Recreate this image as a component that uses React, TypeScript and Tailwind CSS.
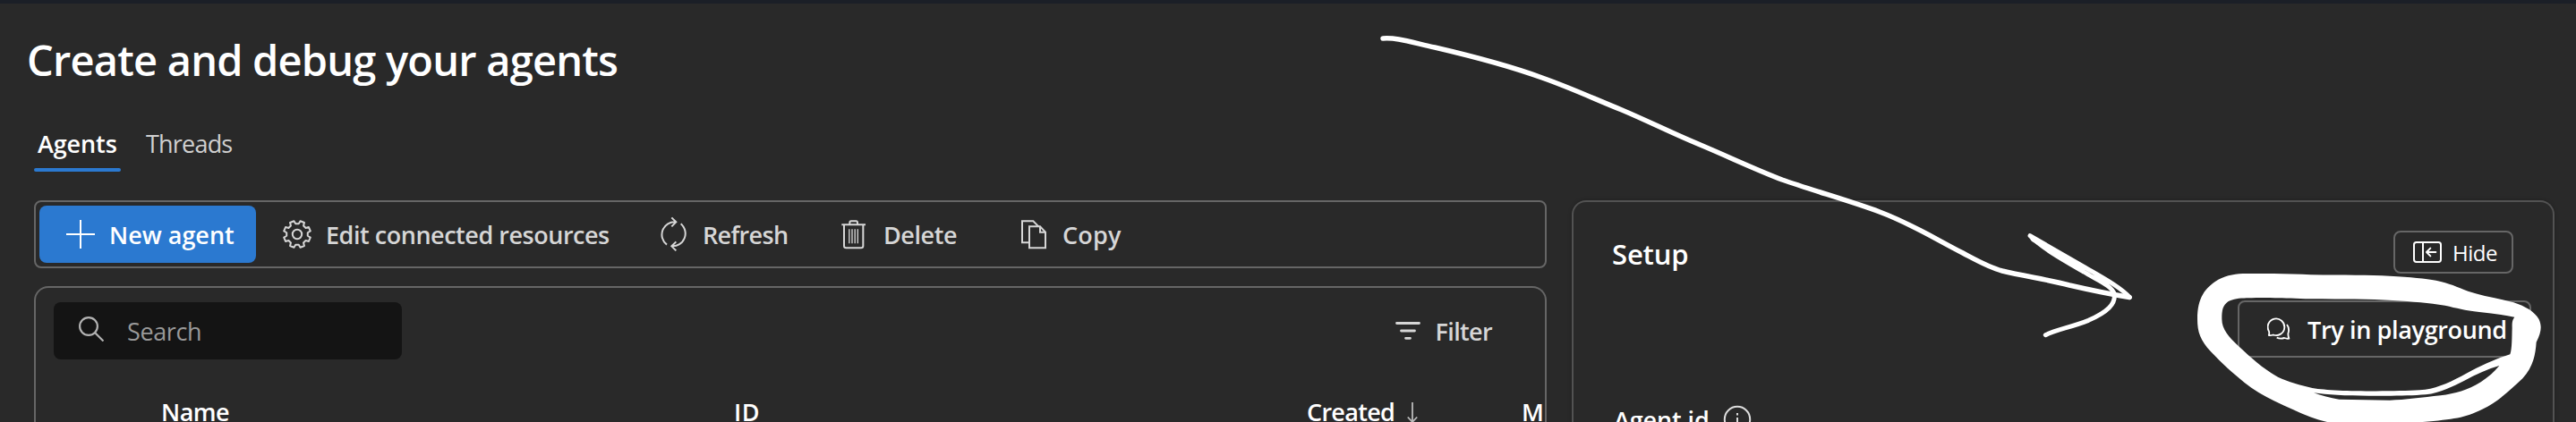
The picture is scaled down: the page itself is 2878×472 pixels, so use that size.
import type { ReactNode } from 'react';

const gearPath = (() => {
  const pts: string[] = [];
  for (let i = 0; i < 8; i++) {
    const mid = 22.5 + i * 45;
    const add = (deg: number, r: number) => {
      const a = (deg * Math.PI) / 180;
      pts.push(`${(16 + r * Math.cos(a)).toFixed(2)} ${(16 + r * Math.sin(a)).toFixed(2)}`);
    };
    add(mid - 14, 11.9);
    add(mid - 9, 15.2);
    add(mid + 9, 15.2);
    add(mid + 14, 11.9);
  }
  return `M${pts.join('L')}Z`;
})();

const stroke = { fill: 'none', stroke: 'currentColor' } as const;

function PlusIcon() {
  return (
    <svg className="h-8 w-8" viewBox="0 0 32 32" {...stroke} strokeWidth="2">
      <path d="M16 0V32M0 16H32" />
    </svg>
  );
}

function GearIcon() {
  return (
    <svg className="h-8 w-8" viewBox="0 0 32 32" {...stroke} strokeWidth="2" strokeLinejoin="round">
      <path d={gearPath} />
      <circle cx="16" cy="16" r="5.2" />
    </svg>
  );
}

function RefreshIcon() {
  return (
    <svg className="h-10 w-8" viewBox="36 36 96 120" {...stroke} strokeWidth="6">
      <path d="M60 131A42.500 42.500 0 0 1 90 55M76 40L91 55L76 70" />
      <path d="M107 61A42.500 42.500 0 0 1 77 136M91 121L76 136L91 151" />
    </svg>
  );
}

function TrashIcon() {
  return (
    <svg className="h-[34px] w-7" viewBox="60 44 84 102" {...stroke} strokeWidth="6">
      <path d="M61 63H141M88 63V56Q88 51 93 51H109Q114 51 114 56V63" />
      <path d="M69 63V134Q69 141 76 141H126Q133 141 133 134V63" />
      <path d="M86.500 78V126M96 78V126M105.500 78V126M115 78V126" strokeWidth="4" />
    </svg>
  );
}

function CopyIcon() {
  return (
    <svg className="h-[34px] w-[30px]" viewBox="660 44 90 102" {...stroke} strokeWidth="6">
      <path d="M690 123H666V51H703L721 69" />
      <path d="M690 69H726L744 88V141H690ZM726 69V88H744" />
    </svg>
  );
}

function SearchIcon() {
  return (
    <svg className="h-7 w-7" viewBox="0 0 28 28" {...stroke} strokeWidth="2.200">
      <circle cx="11" cy="11" r="9.900" />
      <path d="M18 18L27.500 27.500" />
    </svg>
  );
}

function FilterIcon() {
  return (
    <svg className="h-5 w-7" viewBox="0 0 28 20" {...stroke} strokeWidth="2.800" strokeLinecap="round">
      <path d="M1.500 1.500H26.500M6.500 10H21.500M11.500 18.300H16.500" />
    </svg>
  );
}

function SortDownIcon() {
  return (
    <svg className="h-8 w-3" viewBox="0 0 12 32" {...stroke} strokeWidth="1.8">
      <path d="M6 0V22M.800 16.500L6 22L11.200 16.500" />
    </svg>
  );
}

function PanelIcon() {
  return (
    <svg className="h-6 w-8" viewBox="588 30 96 72" {...stroke} strokeWidth="6">
      <rect x="591" y="33" width="90" height="66" rx="8" />
      <path d="M621 33V99" />
      <path d="M633 66H664M646 53L633 66L646 79" strokeLinecap="round" strokeLinejoin="round" />
    </svg>
  );
}

function ChatIcon() {
  return (
    <svg className="h-[26px] w-[26px]" viewBox="99 286 78 78" {...stroke} strokeWidth="5.5" strokeLinejoin="round">
      <path d="M104.500 346Q107 338 104.500 332A28 28 0 1 1 119 344.500Q112 347 104.500 346Z" />
      <path d="M165 310Q175 323 169 341Q169 349 172 357Q164 358 156 355Q143 359 131 354" />
    </svg>
  );
}

function InfoIcon() {
  return (
    <svg className="h-8 w-8" viewBox="0 0 32 32" {...stroke} strokeWidth="2">
      <circle cx="16" cy="16" r="14.200" />
      <path d="M16 14V23M16 9V11.500" />
    </svg>
  );
}

function ToolButton({ icon, label, className }: { icon: ReactNode; label: string; className: string }) {
  return (
    <button className={`flex h-16 shrink-0 items-center whitespace-nowrap font-semibold leading-10 ${className}`}>
      {icon}
      <span className="pt-[2px]">{label}</span>
    </button>
  );
}

function Annotations() {
  return (
    <svg className="pointer-events-none absolute inset-0" width="2878" height="472" viewBox="0 0 2878 472">
      <path
        d="M1545 43C1560 42 1572 46 1603 53C1650 64 1685 73 1723 87C1757 99 1782 111 1812 123C1845 137 1870 150 1902 163C1935 177 1960 189 1991 201C2025 213 2068 225 2100 237C2135 250 2160 266 2193 283C2210 292 2222 299 2237 303C2262 309 2290 313 2312 319C2338 325 2352 328 2379 332.500"
        fill="none" stroke="#fff" strokeWidth="5.500" strokeLinecap="round"
      />
      <g transform="translate(2100 180) scale(.333333)" fill="none" stroke="#fff" strokeWidth="15" strokeLinecap="round" strokeLinejoin="round">
        <path d="M838 458C810 425 745 390 690 358L504 251C540 290 620 335 684 372C725 398 780 418 787 448C790 480 765 506 700 535C640 559 590 566 556 584" />
        <path d="M515 262L680 358" strokeWidth="18" />
      </g>
      <g transform="translate(2420 200) scale(.333333)">
        <path
          fill="#fff"
          fillRule="evenodd"
          d="M270 318C340 317 420 318 485 322C600 324 680 322 750 326C820 330 870 334 905 341C950 350 975 363 1012 377C1060 393 1110 400 1165 415C1205 428 1235 446 1250 472C1260 495 1258 515 1241 548C1238 590 1232 628 1195 670C1150 712 1110 750 1060 773C1000 803 965 806 860 816L540 816C500 806 470 794 430 776C370 750 310 722 262 683C225 654 185 617 150 580C115 540 105 515 105 470C105 400 130 365 175 338C205 323 235 318 270 318Z
          M187 470C187 440 190 425 208 412C225 403 245 401 270 400C350 398 400 400 485 403C600 405 680 403 760 408C830 412 880 417 935 425C975 434 1000 441 1050 447C1090 452 1130 456 1168 464C1160 475 1160 480 1160 500C1159 530 1160 570 1153 589C1100 605 1040 635 990 662C940 688 900 705 850 709C780 713 650 713 580 710C540 708 515 706 490 702C450 692 410 682 375 665C330 640 290 605 245 563C210 530 187 505 187 470Z
          M495 718C540 725 600 728 680 728C760 729 820 728 870 724C920 718 960 697 1000 677C1040 655 1080 638 1117 627C1100 648 1080 665 1055 682C1010 710 970 721 920 727C860 733 800 742 750 743L580 740C550 735 520 727 495 718Z"
        />
      </g>
    </svg>
  );
}

export default function App() {
  return (
    <div className="relative flex h-[472px] w-[2878px] flex-col overflow-hidden bg-[#292929] font-['Open_Sans',sans-serif] text-[27px] text-white">
      <div className="h-1 shrink-0 bg-[#1b1f27]" />
      <h1 className="mt-[31px] h-16 shrink-0 pl-[30px] text-[47px] font-semibold leading-[64px] tracking-[-0.8px]">
        Create and debug your agents
      </h1>

      <nav className="mt-[42px] flex h-[51px] shrink-0 pl-[38px] leading-10">
        <div className="flex w-[97px] flex-col gap-[7px]">
          <span className="pl-1 font-semibold tracking-[-0.1px]">Agents</span>
          <span className="h-1 rounded-full bg-[#2b79d0]" />
        </div>
        <span className="ml-[28px] tracking-[-0.8px] text-[#d0d0d0]">Threads</span>
      </nav>

      <main className="mt-8 flex shrink-0 gap-7 pl-[38px]">
        <section className="flex w-[1690px] flex-col gap-5">
          <div className="flex h-[76px] items-center rounded-lg border-2 border-[#666] pl-1 text-[#d6d6d6]">
            <ToolButton icon={<PlusIcon />} label="New agent" className="w-[242px] gap-[16px] rounded-lg bg-[#2b79d0] pl-[30px] text-white" />
            <ToolButton icon={<GearIcon />} label="Edit connected resources" className="w-[420px] gap-[16px] pl-[30px] tracking-[-0.47px]" />
            <ToolButton icon={<RefreshIcon />} label="Refresh" className="w-[204px] gap-[16px] pl-[31px] tracking-[-0.65px]" />
            <ToolButton icon={<TrashIcon />} label="Delete" className="w-[200px] gap-[19px] pl-[30px] tracking-[-0.42px]" />
            <ToolButton icon={<CopyIcon />} label="Copy" className="gap-[17px] pl-[30px] tracking-[0.2px]" />
          </div>

          <div className="flex h-[200px] flex-col overflow-hidden rounded-t-2xl border-2 border-b-0 border-[#666] pt-4">
            <div className="flex h-16 shrink-0 items-center justify-between pl-5 pr-[59px] leading-10">
              <div className="flex h-16 w-[389px] items-center gap-[26px] rounded-lg bg-[#141414] pl-7 tracking-[-0.39px] text-[#999]">
                <span className="mb-1 text-[#b3b3b3]"><SearchIcon /></span>
                <span className="pt-[2px]">Search</span>
              </div>
              <div className="flex items-center gap-[17px] font-semibold tracking-[-0.65px] text-[#d6d6d6]">
                <FilterIcon />
                <span className="pt-[2px]">Filter</span>
              </div>
            </div>
            <div className="mt-[39px] flex h-10 shrink-0 pl-[140px] font-semibold leading-10">
              <span className="w-[640px] tracking-[-0.52px]">Name</span>
              <span className="w-[640px] tracking-[0.5px]">ID</span>
              <div className="flex w-[240px] gap-[14px]">
                <span className="tracking-[-0.7px]">Created</span>
                <span className="mt-[9px] text-[#bbb]"><SortDownIcon /></span>
              </div>
              <span className="w-[26px] shrink-0 overflow-hidden">M</span>
            </div>
          </div>
        </section>

        <section className="flex h-[296px] w-[1098px] flex-col rounded-t-2xl border-2 border-b-0 border-[#525252] pl-[43px] pr-6 pt-8 shadow-[0_0_4px_rgba(0,0,0,0.25)]">
          <div className="flex h-12 shrink-0 items-center justify-between pr-5">
            <h2 className="mt-[3px] text-[31px] font-semibold leading-10 tracking-[-0.15px]">Setup</h2>
            <button className="flex h-12 w-[134px] items-center gap-[12px] rounded-lg border-2 border-[#666] pl-5 text-[24px] leading-8 tracking-[-0.48px]">
              <PanelIcon />
              <span className="pt-[2px]">Hide</span>
            </button>
          </div>
          <button className="mt-[30px] flex h-16 w-[328px] shrink-0 items-center gap-[19px] self-end rounded-lg border-2 border-[#666] pl-[31px] font-semibold leading-10 tracking-[-0.35px]">
            <ChatIcon />
            <span className="whitespace-nowrap pt-[2px]">Try in playground</span>
          </button>
          <div className="mt-[50px] flex h-10 shrink-0 items-center gap-[15px] pl-[2px] font-semibold leading-10 tracking-[-0.11px]">
            <span>Agent id</span>
            <span className="mb-[2px] text-[#ddd]"><InfoIcon /></span>
          </div>
        </section>
      </main>
      <Annotations />
    </div>
  );
}
